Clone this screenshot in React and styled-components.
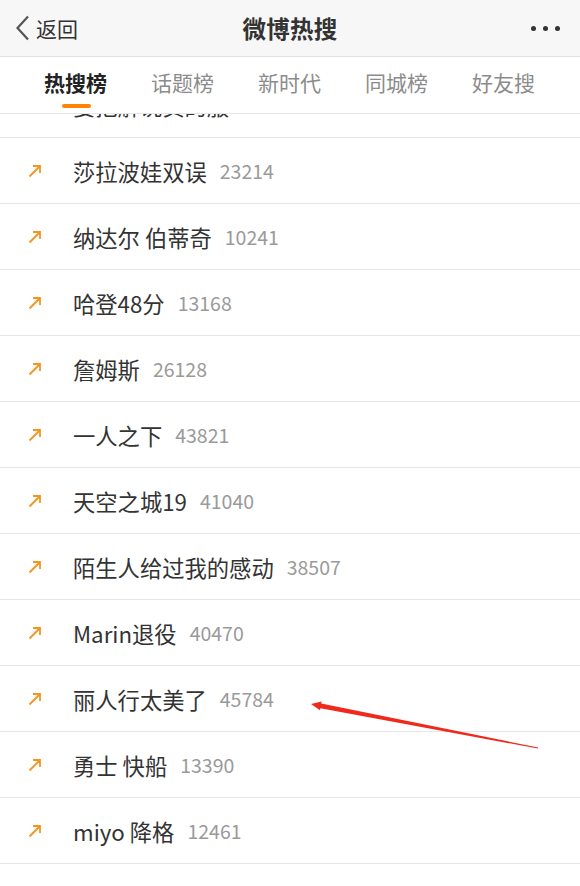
import React from 'react';
import styled, { createGlobalStyle } from 'styled-components';

const GlobalStyle = createGlobalStyle`
    html, body {
        margin: 0;
        padding: 0;
        background: #fff;
        overflow: hidden;
    }
    body {
        font-family: 'Noto Sans CJK SC', 'Noto Sans', sans-serif;
        color: #333;
    }
`;

const Page = styled.div`
    position: relative;
    width: 580px;
    height: 886px;
    overflow: hidden;
    display: flex;
    flex-direction: column;
    background: #fff;
`;

const NavBar = styled.header`
    height: 56px;
    flex-shrink: 0;
    display: grid;
    grid-template-columns: 1fr auto 1fr;
    align-items: center;
    background: #f8f7f8;
    border-bottom: 1px solid #e3e2e3;
`;

const Back = styled.div`
    display: flex;
    align-items: center;
    gap: 5px;
    padding-left: 15px;
    font-size: 21px;
    color: #333;
`;

const Title = styled.h1`
    margin: 0;
    font-size: 23.5px;
    font-weight: 700;
    color: #333;
    letter-spacing: 0.3px;
`;

const More = styled.div`
    justify-self: end;
    display: flex;
    gap: 7px;
    padding-right: 20px;
`;

const Dot = styled.span`
    width: 5px;
    height: 5px;
    border-radius: 50%;
    background: #333;
`;

const Tabs = styled.nav`
    height: 56px;
    flex-shrink: 0;
    display: grid;
    grid-template-columns: repeat(5, 107px);
    padding: 0 22px;
    border-bottom: 1px solid #e6e6e6;
    background: #fff;
    position: relative;
    z-index: 1;
`;

const Tab = styled.div`
    position: relative;
    display: flex;
    align-items: center;
    justify-content: center;
    padding-bottom: 7px;
    font-size: 21px;
    font-weight: ${p => (p.$active ? 700 : 400)};
    color: ${p => (p.$active ? '#222' : '#8c8c8c')};

    &::after {
        content: '';
        display: ${p => (p.$active ? 'block' : 'none')};
        position: absolute;
        bottom: 5px;
        left: 50%;
        margin-left: -14px;
        width: 29px;
        height: 4px;
        border-radius: 2px;
        background: #ff8200;
    }
`;

const List = styled.ul`
    list-style: none;
    margin: 0;
    padding: 0;
    flex: 1;
    overflow: hidden;
`;

const Row = styled.li`
    height: 65px;
    display: flex;
    align-items: center;
    border-bottom: 1px solid #e6e6e6;
    &:first-child {
        margin-top: -42px;
    }
`;

const IconCell = styled.span`
    width: 73px;
    padding-left: 27px;
    box-sizing: border-box;
    display: flex;
    align-items: center;
`;

const Word = styled.span`
    font-size: 22.3px;
    color: #333;
`;

const Count = styled.span`
    margin-left: 13px;
    font-size: 19.5px;
    color: #9a9a9a;
`;

const Overlay = styled.svg`
    position: absolute;
    left: 0;
    top: 0;
    pointer-events: none;
`;

const RiseIcon = () => (
    <svg width="16" height="16" viewBox="0 0 16 16">
        <path
            d="M2.5 13.5 L13 3 M6 3 H13 V10"
            fill="none"
            stroke="#f7941f"
            strokeWidth="1.8"
        />
    </svg>
);

const items = [
    ['要把解说员的服', ''],
    ['莎拉波娃双误', '23214'],
    ['纳达尔 伯蒂奇', '10241'],
    ['哈登48分', '13168'],
    ['詹姆斯', '26128'],
    ['一人之下', '43821'],
    ['天空之城19', '41040'],
    ['陌生人给过我的感动', '38507'],
    ['Marin退役', '40470'],
    ['丽人行太美了', '45784'],
    ['勇士 快船', '13390'],
    ['miyo 降格', '12461'],
    ['', ''],
];

const tabs = ['热搜榜', '话题榜', '新时代', '同城榜', '好友搜'];

const App = () => {
    return (
        <>
            <GlobalStyle />
            <Page>
                <NavBar>
                    <Back>
                        <svg width="16" height="26" viewBox="0 0 16 26">
                            <path
                                d="M13 1.5 L2.5 13 L13 24.5"
                                fill="none"
                                stroke="#555"
                                strokeWidth="2.2"
                            />
                        </svg>
                        返回
                    </Back>
                    <Title>微博热搜</Title>
                    <More>
                        <Dot />
                        <Dot />
                        <Dot />
                    </More>
                </NavBar>
                <Tabs>
                    {tabs.map((t, i) => (
                        <Tab key={t} $active={i === 0}>
                            {t}
                        </Tab>
                    ))}
                </Tabs>
                <List>
                    {items.map(([w, c], i) => (
                        <Row key={i}>
                            <IconCell>{w && <RiseIcon />}</IconCell>
                            <Word>{w}</Word>
                            {c && <Count>{c}</Count>}
                        </Row>
                    ))}
                </List>
                {/* red annotation arrow */}
                <Overlay width="580" height="886" viewBox="0 0 580 886">
                    <polygon
                        points="311,704 321.6,701.6 321.2,703.6 538.1,747.5 537.9,748.6 320.4,708.2 320,710.2"
                        fill="#ef2a1d"
                    />
                </Overlay>
            </Page>
        </>
    );
};

export default App;
